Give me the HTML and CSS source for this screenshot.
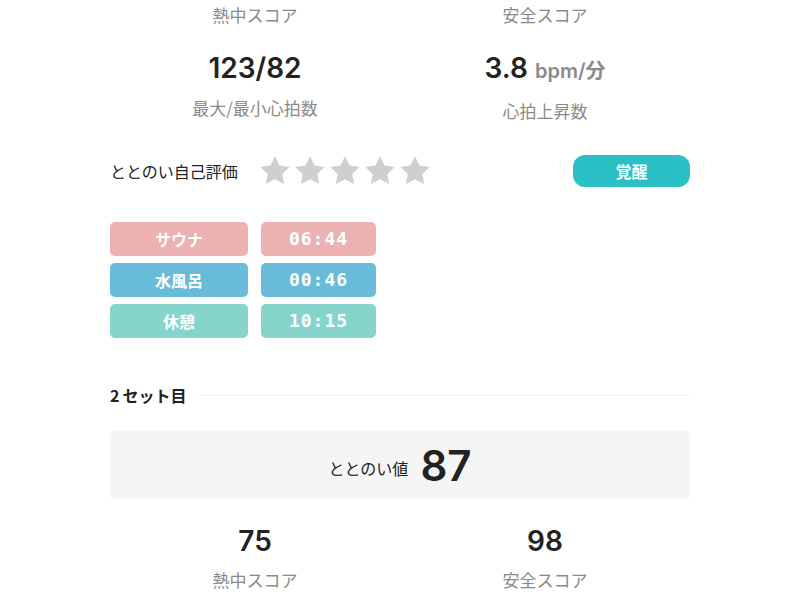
FILE: index.html
```html
<!DOCTYPE html>
<html lang="ja">
<head>
    <meta charset="UTF-8">
    <meta name="viewport" content="width=device-width, initial-scale=1.0">
    <title>サウナ記録</title>
    <link rel="stylesheet" href="styles.css">
</head>
<body>

<div class="container">
    <div class="stats">
        <div class="stat">
            <div class="stat-label">熱中スコア</div>
        </div>
        <div class="stat">
            <div class="stat-label">安全スコア</div>
        </div>
    </div>

    <div class="stats stats-sub">
        <div class="stat">
            <div class="stat-value">123/82</div>
            <div class="stat-label stat-label-below">最大/最小心拍数</div>
        </div>
        <div class="stat">
            <div class="stat-value">3.8 <span class="unit">bpm/分</span></div>
            <div class="stat-label stat-label-below">心拍上昇数</div>
        </div>
    </div>

    <div class="rating">
        <span class="rating-label">ととのい自己評価</span>
        <div class="stars">
            <svg class="star" viewBox="0 0 24 24"><polygon points="12,1.6 15.2,8.1 22.3,9.1 17.2,14.1 18.4,21.2 12,17.8 5.6,21.2 6.8,14.1 1.7,9.1 8.8,8.1"/></svg>
            <svg class="star" viewBox="0 0 24 24"><polygon points="12,1.6 15.2,8.1 22.3,9.1 17.2,14.1 18.4,21.2 12,17.8 5.6,21.2 6.8,14.1 1.7,9.1 8.8,8.1"/></svg>
            <svg class="star" viewBox="0 0 24 24"><polygon points="12,1.6 15.2,8.1 22.3,9.1 17.2,14.1 18.4,21.2 12,17.8 5.6,21.2 6.8,14.1 1.7,9.1 8.8,8.1"/></svg>
            <svg class="star" viewBox="0 0 24 24"><polygon points="12,1.6 15.2,8.1 22.3,9.1 17.2,14.1 18.4,21.2 12,17.8 5.6,21.2 6.8,14.1 1.7,9.1 8.8,8.1"/></svg>
            <svg class="star" viewBox="0 0 24 24"><polygon points="12,1.6 15.2,8.1 22.3,9.1 17.2,14.1 18.4,21.2 12,17.8 5.6,21.2 6.8,14.1 1.7,9.1 8.8,8.1"/></svg>
        </div>
        <button class="mood">覚醒</button>
    </div>

    <div class="steps">
        <div class="step sauna">サウナ</div>
        <div class="step time sauna">06:44</div>
        <div class="step water">水風呂</div>
        <div class="step time water">00:46</div>
        <div class="step rest">休憩</div>
        <div class="step time rest">10:15</div>
    </div>

    <div class="set-heading">
        <span><span class="set-no">2</span>セット目</span>
        <div class="set-line"></div>
    </div>

    <div class="totonoi">
        <span class="totonoi-label">ととのい値</span>
        <span class="totonoi-value">87</span>
    </div>

    <div class="stats stats-bottom">
        <div class="stat">
            <div class="stat-value">75</div>
            <div class="stat-label stat-label-below">熱中スコア</div>
        </div>
        <div class="stat">
            <div class="stat-value">98</div>
            <div class="stat-label stat-label-below">安全スコア</div>
        </div>
    </div>
</div>

</body>
</html>
```

FILE: styles.css
```css
body {
    margin: 0;
    background-color: #ffffff;
    color: #222222;
    font-family: "Noto Sans CJK JP", "Noto Sans", sans-serif;
}
.container {
    width: 580px;
    margin: 0 auto;
    padding-top: 3px;
}
.stats {
    display: grid;
    grid-template-columns: 1fr 1fr;
}
.stat {
    text-align: center;
}
.stat-label {
    font-size: 17px;
    line-height: 24px;
    color: #8a8a8a;
}
.stat-label-below {
    margin-top: 11px;
}
.stats-sub {
    margin-top: 24px;
}
.stat-value {
    font-family: Inter, "Noto Sans CJK JP", sans-serif;
    font-size: 28px;
    font-weight: 600;
    line-height: 34px;
    color: #222222;
}
.unit {
    font-size: 20px;
    color: #8a8a8a;
    font-weight: 600;
}
.rating {
    display: flex;
    align-items: center;
    margin-top: 32px;
    height: 32px;
}
.rating-label {
    font-size: 16px;
}
.stars {
    display: flex;
    gap: 1px;
    margin-left: 20px;
}
.star {
    width: 34px;
    height: 34px;
    fill: #cfcfcf;
}
.mood {
    margin-left: auto;
    width: 117px;
    height: 32px;
    border: none;
    border-radius: 12px;
    background-color: #2bc0c6;
    color: #ffffff;
    font-family: "Noto Sans CJK JP", sans-serif;
    font-size: 16px;
    font-weight: 700;
}
.steps {
    display: grid;
    grid-template-columns: 138px 115px;
    column-gap: 13px;
    row-gap: 7px;
    margin-top: 35px;
}
.step {
    height: 34px;
    line-height: 34px;
    border-radius: 5px;
    text-align: center;
    color: #ffffff;
    font-size: 16px;
    font-weight: 700;
}
.time {
    font-family: "DejaVu Sans Mono", monospace;
    font-size: 18px;
    letter-spacing: 1px;
}
.sauna {
    background-color: #ecb2b2;
}
.water {
    background-color: #68bcd9;
}
.rest {
    background-color: #85d5cc;
}
.set-heading {
    display: flex;
    align-items: center;
    gap: 13px;
    margin-top: 45px;
    line-height: 24px;
    font-size: 16px;
    font-weight: 700;
}
.set-no {
    margin-right: 3px;
}
.set-line {
    flex: 1;
    height: 1px;
    background-color: #eeeeee;
}
.totonoi {
    display: flex;
    justify-content: center;
    align-items: center;
    gap: 12px;
    margin-top: 24px;
    height: 68px;
    background-color: #f5f5f5;
    border-radius: 4px;
}
.totonoi-label {
    font-size: 16px;
    margin-top: 6px;
}
.totonoi-value {
    font-family: Inter, sans-serif;
    font-size: 42px;
    font-weight: 600;
}
.stats-bottom {
    margin-top: 25px;
}
.stats-bottom .stat-label-below {
    margin-top: 10px;
}
```
